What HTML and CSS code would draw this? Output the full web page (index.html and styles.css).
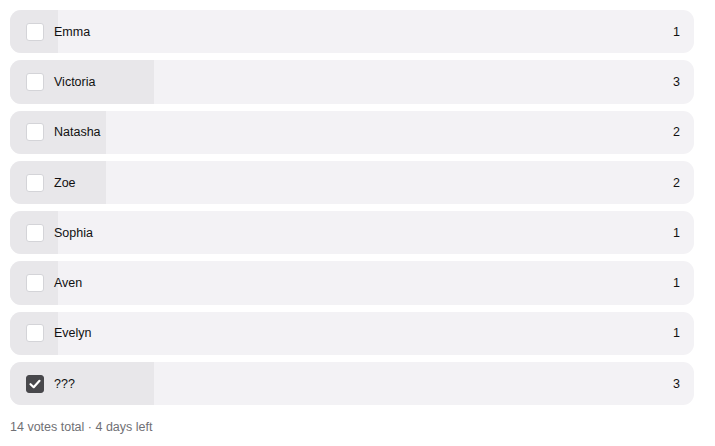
FILE: index.html
```html
<!DOCTYPE html>
<html>
<head>
<meta charset="utf-8">
<link rel="stylesheet" href="styles.css">
</head>
<body>
<div class="poll">
  <div class="option"><div class="fill" style="width:7%"></div><span class="box"></span><span class="name">Emma</span><span class="count">1</span></div>
  <div class="option"><div class="fill" style="width:21%"></div><span class="box"></span><span class="name">Victoria</span><span class="count">3</span></div>
  <div class="option"><div class="fill" style="width:14%"></div><span class="box"></span><span class="name">Natasha</span><span class="count">2</span></div>
  <div class="option"><div class="fill" style="width:14%"></div><span class="box"></span><span class="name">Zoe</span><span class="count">2</span></div>
  <div class="option"><div class="fill" style="width:7%"></div><span class="box"></span><span class="name">Sophia</span><span class="count">1</span></div>
  <div class="option"><div class="fill" style="width:7%"></div><span class="box"></span><span class="name">Aven</span><span class="count">1</span></div>
  <div class="option"><div class="fill" style="width:7%"></div><span class="box"></span><span class="name">Evelyn</span><span class="count">1</span></div>
  <div class="option"><div class="fill" style="width:21%"></div><span class="box checked"><svg width="14" height="14" viewBox="0 0 14 14"><path d="M2.5 7.2 L5.7 10.2 L11.5 3.8" fill="none" stroke="#fff" stroke-width="2.2" stroke-linecap="round" stroke-linejoin="round"/></svg></span><span class="name">???</span><span class="count">3</span></div>
  <div class="footer">14 votes total · 4 days left</div>
</div>
</body>
</html>
```
FILE: styles.css
```css
* { box-sizing: border-box; }
body {
  margin: 0;
  padding: 10px;
  font-family: "Liberation Sans", Arial, sans-serif;
  font-size: 12.5px;
  color: #111;
  background: #fff;
}
.poll {
  width: 684px;
  display: flex;
  flex-direction: column;
  gap: 7px;
}
.option {
  position: relative;
  height: 43.3px;
  border-radius: 11px;
  background: #f3f2f5;
  overflow: hidden;
  display: flex;
  align-items: center;
  padding: 0 14px 0 16px;
}
.fill {
  position: absolute;
  left: 0; top: 0; bottom: 0;
  background: #e8e7ea;
}
.box {
  position: relative;
  width: 18px;
  height: 18px;
  border: 1px solid #d4d4d8;
  border-radius: 3px;
  background: #fff;
  margin-right: 10px;
  display: flex;
  align-items: center;
  justify-content: center;
}
.box.checked {
  background: #48484c;
  border-color: #48484c;
}
.name {
  position: relative;
  flex: 1;
}
.count {
  position: relative;
}
.footer {
  margin-top: 8px;
  color: #707075;
  font-size: 12.5px;
}
```
